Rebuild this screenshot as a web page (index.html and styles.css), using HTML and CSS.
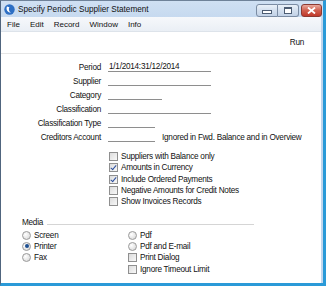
FILE: index.html
```html
<!DOCTYPE html>
<html lang="en">
<head>
    <meta charset="UTF-8">
    <title>Specify Periodic Supplier Statement</title>
    <link rel="stylesheet" href="styles.css">
</head>
<body>
    <div class="window">
        <!-- Title bar -->
        <div class="titlebar">
            <svg class="app-icon" width="11" height="11" viewBox="0 0 11 11">
                <circle cx="5.5" cy="5.5" r="5.2" fill="#2d6fc4"/>
                <path d="M3 2.5 C1.8 5 3 8.5 7 8.6 C5 7.6 4.2 5.2 5.4 3.2 Z" fill="#fff"/>
            </svg>
            <span class="title">Specify Periodic Supplier Statement</span>
            <div class="win-buttons">
                <span class="wbtn min"><i></i></span>
                <span class="wbtn max"><i></i></span>
                <span class="wbtn close">
                    <svg width="9" height="7" viewBox="0 0 9 7"><path d="M1 0.5 L8 6.5 M8 0.5 L1 6.5" stroke="#fff" stroke-width="1.8"/></svg>
                </span>
            </div>
        </div>

        <!-- Menu bar -->
        <div class="menubar">
            <span>File</span>
            <span>Edit</span>
            <span>Record</span>
            <span>Window</span>
            <span>Info</span>
        </div>

        <div class="client">
            <div class="toolbar">
                <span class="run">Run</span>
            </div>

            <div class="form">
                <div class="row">
                    <label>Period</label>
                    <span class="field wide">1/1/2014:31/12/2014</span>
                </div>
                <div class="row">
                    <label>Supplier</label>
                    <span class="field wide"></span>
                </div>
                <div class="row">
                    <label>Category</label>
                    <span class="field mid"></span>
                </div>
                <div class="row">
                    <label>Classification</label>
                    <span class="field wide"></span>
                </div>
                <div class="row">
                    <label>Classification Type</label>
                    <span class="field short"></span>
                </div>
                <div class="row">
                    <label>Creditors Account</label>
                    <span class="field short"></span>
                    <span class="note">Ignored in Fwd. Balance and in Overview</span>
                </div>

                <div class="checks">
                    <div class="check"><span class="box"></span>Suppliers with Balance only</div>
                    <div class="check"><span class="box on"></span>Amounts in Currency</div>
                    <div class="check"><span class="box on"></span>Include Ordered Payments</div>
                    <div class="check"><span class="box"></span>Negative Amounts for Credit Notes</div>
                    <div class="check"><span class="box"></span>Show Invoices Records</div>
                </div>

                <div class="media">
                    <div class="legend"><span>Media</span><span class="rule"></span></div>
                    <div class="media-cols">
                        <div class="media-col">
                            <div class="check"><span class="radio"></span>Screen</div>
                            <div class="check"><span class="radio on"></span>Printer</div>
                            <div class="check"><span class="radio"></span>Fax</div>
                        </div>
                        <div class="media-col second">
                            <div class="check"><span class="radio"></span>Pdf</div>
                            <div class="check"><span class="radio"></span>Pdf and E-mail</div>
                            <div class="check"><span class="box"></span>Print Dialog</div>
                            <div class="check"><span class="box"></span>Ignore Timeout Limit</div>
                        </div>
                    </div>
                </div>
            </div>
        </div>
    </div>
</body>
</html>
```

FILE: styles.css
```css
body {
    margin: 0;
    padding: 0;
    font-family: "Liberation Sans", Arial, sans-serif;
    font-size: 8.2px;
    letter-spacing: -0.25px;
    color: #111;
    background: #fff;
}
.window {
    width: 326px;
    height: 286px;
    box-sizing: border-box;
    display: flex;
    flex-direction: column;
    background: linear-gradient(#cfe0f3, #bfd4ec 30px, #c3d7ee);
    border-left: 1px solid #50657e;
    border-right: 3px solid #2a9ad8;
    border-bottom: 3px solid #2a9ad8;
    border-top: 1px solid #6f8299;
}
.titlebar {
    height: 16px;
    display: flex;
    align-items: center;
    padding-left: 3px;
}
.app-icon {
    margin-right: 3px;
}
.title {
    font-size: 8.2px;
    letter-spacing: 0;
    color: #111;
}
.win-buttons {
    margin-left: auto;
    display: flex;
    align-self: flex-start;
    margin-top: 3px;
    margin-right: 1px;
}
.wbtn {
    height: 11px;
    border: 1px solid #7b8ca3;
    border-radius: 3px;
    background: linear-gradient(#eaf1f9, #d3dfee 50%, #c2d2e6);
    display: flex;
    align-items: center;
    justify-content: center;
}
.wbtn.min {
    width: 20px;
    border-radius: 3px 0 0 3px;
}
.wbtn.min i {
    width: 8px;
    height: 2px;
    margin-top: 3px;
    background: #fff;
    border: 1px solid #4d5d73;
}
.wbtn.max {
    width: 20px;
    border-radius: 0 3px 3px 0;
    border-left: none;
}
.wbtn.max i {
    width: 6px;
    height: 4px;
    border: 1px solid #4d5d73;
    border-top-width: 2px;
    background: #fff;
}
.wbtn.close {
    width: 19px;
    margin-left: 2px;
    border-color: #8c3a32;
    background: linear-gradient(#e9a99d, #d0604f 50%, #c0392b);
}
.menubar {
    height: 14px;
    display: flex;
    align-items: center;
    gap: 10px;
    padding-left: 6px;
    margin-right: 2px;
    background: linear-gradient(#f6f8fb, #eaeff5);
    border-bottom: 1px solid #dde3ea;
    font-size: 8px;
    letter-spacing: 0;
}
.client {
    flex: 1;
    background: #fff;
    margin-right: 2px;
    display: flex;
    flex-direction: column;
}
.toolbar {
    height: 21px;
    display: flex;
    align-items: center;
    justify-content: flex-end;
    padding-right: 17px;
    border-bottom: 1px solid #e6e6e6;
}
.form {
    padding-top: 6px;
}
.row {
    height: 14px;
    display: flex;
    align-items: center;
}
.row label {
    width: 100px;
    text-align: right;
    margin-right: 7px;
}
.field {
    height: 9px;
    line-height: 9px;
    border-bottom: 1px solid #8e8e8e;
    padding-left: 1px;
    box-sizing: content-box;
}
.field.wide {
    width: 102px;
}
.field.mid {
    width: 53px;
}
.field.short {
    width: 46px;
}
.note {
    margin-left: 7px;
}
.checks {
    margin-top: 7px;
    padding-left: 108px;
}
.check {
    height: 11.3px;
    display: flex;
    align-items: center;
}
.box {
    width: 7px;
    height: 7px;
    border: 1px solid #8f8f8f;
    background: linear-gradient(135deg, #dcdcdc, #f8f8f8);
    margin-right: 3px;
    position: relative;
}
.box.on::after {
    content: "";
    position: absolute;
    left: 2px;
    top: 0;
    width: 2px;
    height: 5px;
    border-right: 1.3px solid #2c4f9e;
    border-bottom: 1.3px solid #2c4f9e;
    transform: rotate(40deg);
}
.radio {
    width: 7px;
    height: 7px;
    border: 1px solid #9a9a9a;
    border-radius: 50%;
    background: radial-gradient(circle at 35% 35%, #fff, #d4d4d4);
    margin-right: 3px;
    position: relative;
}
.radio.on::after {
    content: "";
    position: absolute;
    left: 1.5px;
    top: 1.5px;
    width: 4px;
    height: 4px;
    border-radius: 50%;
    background: #1d4f91;
}
.media {
    margin-top: 10px;
    padding-left: 21px;
}
.legend {
    height: 11px;
    display: flex;
    align-items: center;
}
.rule {
    width: 207px;
    margin-left: 4px;
    margin-top: 4px;
    border-top: 1px solid #d5d5d5;
}
.media-cols {
    display: flex;
    margin-top: 1px;
}
.media-col {
    width: 106px;
}
```
